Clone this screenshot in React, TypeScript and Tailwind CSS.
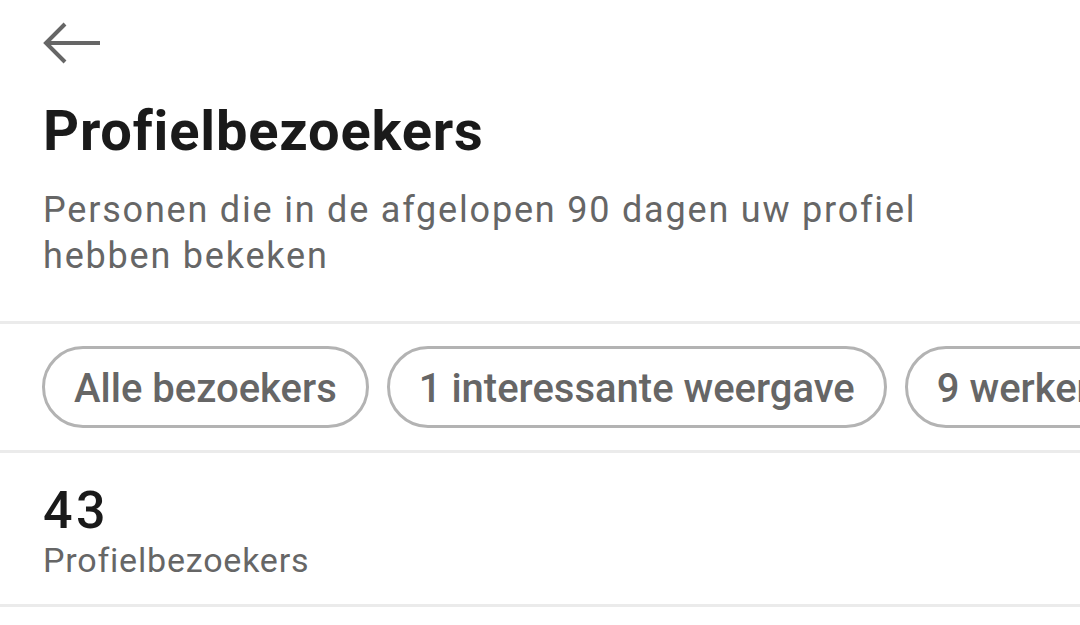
import React from "react";

const chips = ["Alle bezoekers", "1 interessante weergave", "9 werkervaring bij"];

export default function App() {
  return (
    <div className="w-[1080px] h-[625px] overflow-hidden bg-white font-['Roboto',sans-serif]">
      {/* Header */}
      <div className="h-[321px] px-[43px]">
        <div className="h-[86px] flex items-center">
          <svg width="58" height="44" viewBox="0 0 58 44" fill="none" stroke="#666666" strokeWidth="4">
            <path d="M57 22H4" />
            <path d="M22 3L3 22l19 19" />
          </svg>
        </div>
        <h1 className="mt-[13px] text-[56px] leading-[64px] font-bold tracking-[0.8px] text-[#1a1a1a]">
          Profielbezoekers
        </h1>
        <p className="mt-[24px] w-[900px] text-[36px] leading-[46px] tracking-[1.8px] text-[#666666]">
          Personen die in de afgelopen 90 dagen uw profiel hebben bekeken
        </p>
      </div>
      <div className="h-[3px] bg-[#ebebeb]" />

      {/* Filter chips */}
      <div className="h-[126px] flex items-center gap-[18px] pl-[42px] overflow-hidden">
        {chips.map((c) => (
          <div
            key={c}
            className="h-[82px] shrink-0 flex items-center px-[29px] pt-[4px] rounded-full border-[3px] border-[#b3b3b3] text-[40px] font-medium text-[#666666] whitespace-nowrap"
          >
            {c}
          </div>
        ))}
      </div>
      <div className="h-[3px] bg-[#ebebeb]" />

      {/* Count */}
      <div className="h-[151px] px-[43px] pt-[29px]">
        <div className="text-[52px] leading-[57px] font-medium tracking-[3.5px] text-[#1a1a1a]">43</div>
        <div className="mt-[1px] text-[34px] leading-[40px] tracking-[0.8px] text-[#666666]">Profielbezoekers</div>
      </div>
      <div className="h-[3px] bg-[#ebebeb]" />
    </div>
  );
}
